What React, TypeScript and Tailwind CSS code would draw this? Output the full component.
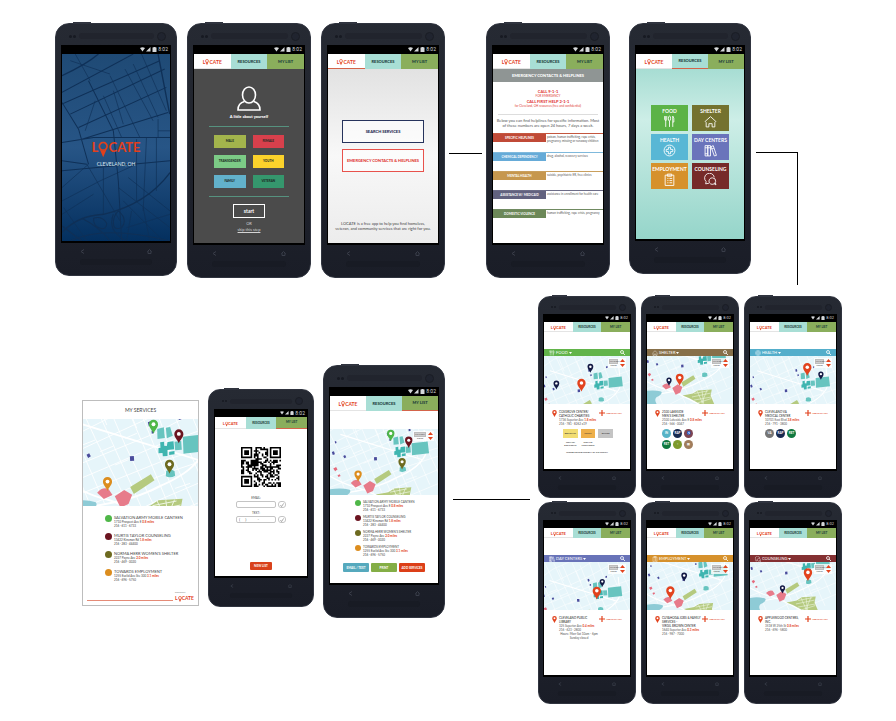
import type { ReactNode } from "react";

type Size = "lg" | "md" | "sm";
type Tab = "locate" | "resources" | "list" | "idle";

const PHONE = {
  lg: { head: "h-[22px]", foot: "h-[33px]", side: "px-[5px]", status: "h-[9px] text-[5px]", tabs: "h-[15px] text-[4px]", radius: "rounded-[14px]", cam: "size-[9px]", logo: "text-[5px]", icon: "size-[5px]", dot: "size-[3px]", grille: "h-[6px]", pad: "px-[19px]", keys: "px-[19px] pt-[6px]" },
  md: { head: "h-[20px]", foot: "h-[29px]", side: "px-[5px]", status: "h-[8px] text-[5px]", tabs: "h-[12px] text-[3px]", radius: "rounded-[12px]", cam: "size-[8px]", logo: "text-[4px]", icon: "size-[4px]", dot: "size-[2px]", grille: "h-[5px]", pad: "px-[16px]", keys: "px-[16px] pt-[6px]" },
  sm: { head: "h-[18px]", foot: "h-[27px]", side: "px-[4px]", status: "h-[8px] text-[4px]", tabs: "h-[10px] text-[3px]", radius: "rounded-[12px]", cam: "size-[7px]", logo: "text-[4px]", icon: "size-[4px]", dot: "size-[2px]", grille: "h-[5px]", pad: "px-[15px]", keys: "px-[15px] pt-[5px]" },
};

function Logo({ className }: { className: string }) {
  return (
    <span className={`inline-flex items-baseline font-bold leading-none text-[#e2401c] ${className}`} aria-label="LOCATE">
      <span>L</span>
      <svg viewBox="0 0 20 32" className="h-[1.25em] w-[0.8em] translate-y-[0.42em]" aria-hidden="true">
        <circle cx="10" cy="9.5" r="7.6" fill="none" stroke="currentColor" strokeWidth="3.4" />
        <path d="M3 15q7 6 14 0L10 31z" fill="currentColor" />
      </svg>
      <span>CATE</span>
    </span>
  );
}

function StatusBar({ size }: { size: Size }) {
  const p = PHONE[size];
  return (
    <div className={`flex shrink-0 items-center justify-end gap-px bg-black pr-[2px] font-[Roboto,sans-serif] leading-none text-[#d5d8da] ${p.status}`}>
      <svg viewBox="0 0 10 10" className={p.icon} fill="currentColor"><path d="M0 2Q5-1 10 2L5 9z" /></svg>
      <svg viewBox="0 0 10 10" className={p.icon} fill="currentColor"><path d="M9 0v9H0z" /></svg>
      <svg viewBox="0 0 10 10" className={p.icon} fill="currentColor"><path d="M1 1h2V0h4v1h2v9H1z" /></svg>
      <span>8:02</span>
    </div>
  );
}

function Tabs({ size, active }: { size: Size; active: Tab }) {
  const p = PHONE[size];
  const line = "border-b border-[#d4644a]";
  return (
    <nav className={`grid shrink-0 grid-cols-3 font-black leading-none text-[#1b3c3a] ${p.tabs}`}>
      <button type="button" className={`flex items-center justify-center bg-white ${active === "locate" ? line : "border-b border-[#e4e4e4]"}`}>
        <Logo className={p.logo} />
      </button>
      <button type="button" className={`flex items-center justify-center bg-[#a8ded5] ${active === "resources" ? line : ""}`}>RESOURCES</button>
      <button type="button" className={`flex items-center justify-center bg-[#8aae5c] ${active === "list" ? line : ""}`}>MY LIST</button>
    </nav>
  );
}

function Phone({ size, box, tab, children }: { size: Size; box: string; tab?: Tab; children: ReactNode }) {
  const p = PHONE[size];
  return (
    <article className={`relative flex shrink-0 flex-col border border-[#30343f] bg-linear-to-b from-[#262a33] to-[#1a1d27] bg-origin-border ${p.radius} ${p.side} ${box}`}>
      <div className="absolute -top-[2px] left-[14%] h-px w-[15%] bg-[#30343f]" />
      <div className={`-mt-px flex shrink-0 items-center pt-[4px] pr-[5px] pl-[8px] ${p.head}`}>
        <i className={`rounded-full bg-[#171a22] ${p.dot}`} />
        <i className={`ml-px rounded-full bg-[#171a22] ${p.dot}`} />
        <i className={`mx-[3px] flex-1 rounded-sm bg-[#21242d] ${p.grille}`} />
        <i className={`rounded-full border border-[#1a1d25] bg-[#20242f] ${p.cam}`} />
      </div>
      <div className="flex min-h-0 flex-1 flex-col bg-black px-px pb-[2px]">
        <StatusBar size={size} />
        <div className="flex min-h-0 flex-1 flex-col overflow-hidden bg-white">
          {tab && <Tabs size={size} active={tab} />}
          {children}
        </div>
      </div>
      <div className={`-mb-px shrink-0 ${p.foot}`}>
        <div className={`flex justify-between text-[#393d49] ${p.keys}`}>
          <svg viewBox="0 0 10 10" className={p.icon} fill="none" stroke="currentColor" strokeWidth="2"><path d="M8 1L2 5l6 4" /></svg>
          <svg viewBox="0 0 10 10" className={p.icon} fill="none" stroke="currentColor" strokeWidth="2"><path d="M1 5l4-4 4 4M2 4v5h6V4" /></svg>
        </div>
        <div className={p.pad}><div className={`mt-[5px] rounded-sm bg-[#181b24] ${p.grille}`} /></div>
      </div>
    </article>
  );
}

/* ---------- Maps ---------- */

type Pin = { x: number; y: number; h: number; color: string };
const RED = "#e2431e";
const NAVY = "#141a45";

function MapPin({ x, y, h, color }: Pin) {
  return (
    <g transform={`translate(${x} ${y}) scale(${h / 40})`}>
      <path d="M0 0C-4-11-13-17-13-27a13 13 0 0 1 26 0C13-17 4-11 0 0z" fill={color} />
      <circle cy="-27" r="5.5" fill="#fff" />
    </g>
  );
}

function CityMap({ view, pins, height }: { view: string; pins: Pin[]; height: string }) {
  return (
    <svg viewBox={view} preserveAspectRatio="xMidYMid slice" className={`block w-full shrink-0 bg-[#e6f5fa] ${height}`} role="img" aria-label="Map of Cleveland services">
      <g stroke="#fff" strokeWidth="2.6" fill="none">
        <path d="M-30 110L40 60 130 20M-30 165L180 60 260 10M-30 215L230 95 330 40M-30 255L240 145 400 60M-30 300L100 245 250 180 450 110" />
        <path d="M-30 345L120 285 270 225 450 170M20 370L150 315 300 255 450 205M100 420L240 350 450 260M200 420L330 370 450 320" />
        <path d="M0 30L60 160 130 300 190 420M45 30L110 170 200 370M90 40L150 180 240 370M140 30L200 170 280 360M180 40L240 190 330 400M225 20L290 210 370 390" />
        <path d="M270 20L330 170 400 330M320 20L370 140 450 310M-30 200L20 300 70 420M-30 100L30 220 90 360M370 20L450 200" />
        <path d="M70 60L95 120M160 70L185 130M22 180L60 165M75 200L115 183M120 240L160 224M215 130L250 116M150 160L185 145M300 310L345 295M225 320L262 302" />
      </g>
      <g stroke="#fff" strokeWidth="5.5" fill="none">
        <path d="M22 368Q170 350 250 305 370 255 386 190L376 100M-30 290Q40 330 90 342T260 420M22 118L370 225" />
      </g>
      <path d="M-30 352Q20 340 62 352 70 362 50 375 20 385 38 416L-30 420z" fill="#8ecbd6" />
      <path d="M66 323Q82 305 100 312L112 330 86 342z" fill="#e77b8a" />
      <path d="M119 334L147 315 171 329 160 357 136 368z" fill="#e77b8a" />
      <path d="M-8 262l12-6 6 10-10 8zM10 290l9-4 4 8-9 4z" fill="#e5697b" />
      <path d="M165 306L227 268 238 286 176 327z" fill="#b5ca7f" />
      <path d="M225 362L250 346 322 341 316 372 336 420 262 416 205 385 172 372z" fill="#b5ca7f" />
      <path d="M232 362l72-14M246 348l30 66M272 346l8 68M298 344L270 412M220 380l96-20M230 396l90-16M250 410l70-22" stroke="#eef6e4" strokeWidth="3" fill="none" />
      <g fill="#67c4bf">
        <path d="M246 132l20-5 3 32-22 3zM272 128l13-2 8 26-18 8zM323 155l68-7 6 50-72 8z" />
        <path d="M298 170l20-2 2 26-20 2zM273 258q12-8 25 0l2 14q-14 8-28 2z" />
      </g>
      <path d="M255 172l12-2v12l8 1 2-12 18-2 2 24-20 2v18l-14 1-1-10-12 1v-16l6-1zM282 200l16-2v10l-16 2z" fill="#3fb5b0" />
      <g fill="#4a4c9c">
        <path d="M34 209l8-4 5 9-8 5zM164 214l12-1 1 14-12 1zM218 112l8-3 3 12-8 3zM310 96l8-2 1 9-8 2zM229 137l7-1 1 8-7 2z" />
        <path d="M-14 192l9-3 4 13-9 3zM-2 148l6-2 2 8-6 2z" />
      </g>
      {pins.map((pin) => <MapPin key={`${pin.x}-${pin.y}`} {...pin} />)}
    </svg>
  );
}

const MY_PINS = [
  { x: 235, y: 146, color: "#4fb748" },
  { x: 311, y: 175, color: "#6b1420" },
  { x: 283, y: 266, color: "#6d6a1f" },
  { x: 97, y: 318, color: "#dc8d1e" },
];

function DistanceControl({ large = false }: { large?: boolean }) {
  return (
    <div className="absolute top-[2px] right-[4px] flex items-center gap-[2px] bg-white/80 p-px text-center text-[2px] leading-[4px] text-[#333]">
      <div className={large ? "w-[12px]" : "w-[9px]"}>
        <div className="border border-[#bdbdbd] bg-[#cfcfcf] leading-[3px]">MINIMUM</div>
        <div className="leading-[3px]">5 miles</div>
      </div>
      <div className="flex flex-col gap-[2px]">
        <button type="button" aria-label="Increase distance"><svg viewBox="0 0 10 6" className="block h-[3px] w-[5px]"><path d="M0 6l5-6 5 6z" fill={RED} /></svg></button>
        <button type="button" aria-label="Decrease distance"><svg viewBox="0 0 10 6" className="block h-[3px] w-[5px]"><path d="M0 0l5 6 5-6z" fill={RED} /></svg></button>
      </div>
    </div>
  );
}

/* ---------- Category glyphs ---------- */

const GLYPH: Record<string, ReactNode> = {
  food: <path d="M3 2v6q0 2 2 2t2-2V2M5 2v20M10 6q0-4 2-4t2 4-2 5-2-5M12 11v11M18 22V2q3 3 2 11h-2" />,
  shelter: <path d="M2 12L12 3l10 9-2 2v8h-5v-6H9v6H4v-8z" />,
  health: <><circle cx="12" cy="12" r="10" /><path d="M10 6h4v4h4v4h-4v4h-4v-4H6v-4h4z" /></>,
  day: <path d="M2 3h5v19H2zM7 3h5v19H7zM2 7h10M2 18h5M13 5l4-2 6 18-4 1zM14 9l4-1" />,
  employment: <path d="M4 4h16v19H4zM8 2h8v4H8zM8 10h2M12 10h5M8 14h2M12 14h5M8 18h2M12 18h5" />,
  counseling: <path d="M9 19l-6 1 1-4A9 9 0 1 1 19 8M16 9a6 6 0 1 1-1 12 7 7 0 0 1-5-3 6 6 0 0 1 6-9zM19 20l3 2-1-4" />,
};

function Glyph({ name, className }: { name: string; className: string }) {
  return <svg viewBox="0 0 24 24" className={className} fill="none" stroke="currentColor" strokeWidth="1.6" aria-hidden="true">{GLYPH[name]}</svg>;
}

/* ---------- Top row screens ---------- */

function SplashScreen() {
  return (
    <div className="relative flex flex-1 flex-col items-center bg-linear-to-b from-[#1f4a75] via-[#275586] to-[#04305f] pt-[80px]">
      <svg viewBox="35 120 326 560" preserveAspectRatio="none" className="absolute inset-0 size-full" fill="none" stroke="#0f3057" aria-hidden="true">
        <path strokeWidth="4" d="M35 185Q110 150 145 120M325 120L360 300M35 655Q80 605 160 600 290 570 361 475M35 635L95 680" />
        <path strokeWidth="3" d="M35 235L250 120M35 270L330 140M60 300L345 165M85 340L350 220M95 375L355 295M35 265L85 345 115 450M115 200L190 350 205 500 215 680M35 470L361 440M35 385L130 370 361 370M35 440L110 450" />
        <path strokeWidth="2" d="M75 120L120 200M180 185L270 370M225 165L310 320M250 150L325 310M275 120L350 290M160 245L215 370M135 260L105 350M60 140L180 180M190 230L220 330M35 520L115 450M110 450L210 620M35 560L150 500 260 450M160 460V600M260 375V560M290 370L280 590M320 370V530M235 490L361 590M205 520L361 640M220 560L340 680M35 600L130 540M40 580L110 680M245 590L230 680M280 580L300 680M230 640L361 600M325 315V370H361M325 350H361" />
        <path strokeWidth="3" d="M95 612Q150 640 180 680M130 612q25-8 40 15 0 20-20 15t-20-30M190 600Q170 650 230 680M205 590q30 25 10 50-25 10-25-15 0-20 15-35M60 680Q160 630 361 680" />
      </svg>
      <div className="relative"><Logo className="text-[13px]" /></div>
      <p className="relative mt-[3px] text-[5px] leading-[6px] text-[#dfe7ef]">CLEVELAND, OH</p>
    </div>
  );
}

const PEOPLE = [
  ["MALE", "bg-[#a3b44c]"], ["FEMALE", "bg-[#d8404c]"],
  ["TRANSGENDER", "bg-[#7ccb86]"], ["YOUTH", "bg-[#fbd22b]"],
  ["FAMILY", "bg-[#62b1cb]"], ["VETERAN", "bg-[#35976d]"],
];

function AboutScreen() {
  return (
    <div className="flex flex-1 flex-col items-center bg-[#4b4b4b] pt-[17px] text-[4px] leading-[5px] text-white">
      <svg viewBox="0 0 24 25" className="h-[25px] w-[26px]" fill="none" stroke="#fff" strokeWidth="1.6" aria-hidden="true">
        <ellipse cx="12" cy="9" rx="6.5" ry="8" />
        <path d="M7.500 15.500Q1 17 1 24h22q0-7-6.500-8.500" />
      </svg>
      <p className="mt-[3px] font-black">A little about yourself</p>
      <div className="mt-[7px] grid w-[80px] grid-cols-2 gap-x-[7px] gap-y-[7px] border-y border-[#56927f] px-[5px] py-[8px]">
        {PEOPLE.map(([label, color]) => (
          <button key={label} type="button" className={`h-[13px] text-[3px] leading-none font-black text-[#1d2b25] ${color}`}>{label}</button>
        ))}
      </div>
      <button type="button" className="mt-[7px] h-[14px] w-[32px] border border-white text-[5px] leading-none font-bold">start</button>
      <p className="mt-[3px] text-[#d4d4d4]">OR</p>
      <a href="#skip" className="mt-px text-[#d4d4d4] underline">skip this step</a>
    </div>
  );
}

function HomeScreen() {
  return (
    <div className="flex flex-1 flex-col items-center bg-linear-to-b from-[#e2e2e2] via-[#f8f8f8] to-[#ececec] pt-[51px] text-[4px] font-black">
      <button type="button" className="h-[23px] w-[82px] border border-[#26335c] bg-white/60 text-[#1c2850]">SEARCH SERVICES</button>
      <button type="button" className="mt-[6px] h-[23px] w-[82px] border border-[#e8524c] bg-white/60 whitespace-nowrap text-[#e03a34]">EMERGENCY CONTACTS &amp; HELPLINES</button>
      <p className="mt-auto mb-[12px] text-center leading-[5px] font-normal whitespace-nowrap text-[#444]">LOCATE is a free app to help you find homeless,<br />veteran, and community services that are right for you.</p>
    </div>
  );
}

const HELPLINES = [
  ["SPECIFIC HELPLINES", "poison, human trafficking, rape crisis, pregnancy, missing or runaway children", "border-[#c4573f]", "bg-[#c04a37]"],
  ["CHEMICAL DEPENDENCY", "drug, alcohol, recovery services", "border-[#7fb9dc]", "bg-[#66abd8]"],
  ["MENTAL HEALTH", "suicide, psychiatric ER, free clinics", "border-[#c99f5d]", "bg-[#c6974e]"],
  ["ASSISTANCE W/ MEDICAID", "assistance in enrollment for health care", "border-[#6d6d88]", "bg-[#62627f]"],
  ["DOMESTIC VIOLENCE", "human trafficking, rape crisis, pregnancy", "border-[#708a61]", "bg-[#6c8858]"],
];

function HelplinesScreen() {
  return (
    <div className="flex flex-1 flex-col text-center text-[4px] leading-[5px] text-[#555]">
      <h2 className="h-[13px] bg-[#8f9594] leading-[13px] font-black whitespace-nowrap text-white">EMERGENCY CONTACTS &amp; HELPLINES</h2>
      <div className="mx-[5px] border-b border-[#ddd] pt-[7px] pb-[6px] text-[#e2403a]">
        <p className="font-black">CALL 9-1-1</p>
        <p className="text-[3px]">FOR EMERGENCY</p>
        <p className="font-black">CALL FIRST HELP 2-1-1</p>
        <p className="text-[3px] leading-[4px]">for Cleveland, OH resources (free and confidential)</p>
      </div>
      <p className="mt-[3px] whitespace-nowrap">Below you can find helplines for specific information. Most<br />of these numbers are open 24 hours, 7 days a week.</p>
      <dl className="mt-[5px] flex flex-col gap-[10px]">
        {HELPLINES.map(([label, text, border, fill]) => (
          <div key={label} className={`flex h-[9px] border-t text-[3px] ${border}`}>
            <dt className={`w-[53px] shrink-0 text-[3px] leading-[8px] font-bold whitespace-nowrap text-white ${fill}`}>{label}</dt>
            <dd className="flex-1 pt-px pl-px text-left leading-[4px]">{text}</dd>
          </div>
        ))}
      </dl>
    </div>
  );
}

const TILES = [
  ["FOOD", "food", "bg-[#5cb346]"], ["SHELTER", "shelter", "bg-[#74722f]"],
  ["HEALTH", "health", "bg-[#58b7d5]"], ["DAY CENTERS", "day", "bg-[#6a74bb]"],
  ["EMPLOYMENT", "employment", "bg-[#d6912c]"], ["COUNSELING", "counseling", "bg-[#762a29]"],
];

function ResourcesScreen() {
  return (
    <div className="flex-1 bg-linear-to-b from-[#a7ddd3] via-[#cdeee7] via-30% to-[#95d5ca] pt-[36px]">
      <div className="mx-auto grid w-[78px] grid-cols-2 gap-x-[4px] gap-y-[3px]">
        {TILES.map(([label, icon, color]) => (
          <button key={label} type="button" className={`flex h-[26px] flex-col items-center pt-[3px] text-[5px] leading-[6px] font-bold whitespace-nowrap text-white ${color}`}>
            {label}
            <Glyph name={icon} className="mt-px size-[13px]" />
          </button>
        ))}
      </div>
    </div>
  );
}

/* ---------- My list screens ---------- */

const SERVICES = [
  ["SALVATION ARMY MOBILE CANTEEN", "1710 Prospect Ave E", "0.8 miles", "216 · 611 · 6733", "bg-[#4fb748]"],
  ["MURTIS TAYLOR COUNSELING", "13422 Kinsman Rd", "1.8 miles", "216 · 283 · 44400", "bg-[#6b1420]"],
  ["NORMA HERR WOMEN'S SHELTER", "2227 Payne Ave", "2.0 miles", "216 · 469 · 0020", "bg-[#6d6a1f]"],
  ["TOWARDS EMPLOYMENT", "1255 Euclid Ave Ste 300", "3.1 miles", "216 · 696 · 5750", "bg-[#dc8d1e]"],
];

function ServiceList({ large }: { large: boolean }) {
  return (
    <ul className={large ? "mt-[9px] flex flex-col gap-[5px] pl-[22px]" : "mt-[5px] flex flex-col gap-[3px] pl-[25px]"}>
      {SERVICES.map(([name, street, miles, phone, color]) => (
        <li key={name} className="flex gap-[2px] text-[3px] leading-[4px] whitespace-nowrap text-[#444]">
          <i className={`shrink-0 rounded-full ${large ? "size-[7px]" : "size-[6px]"} ${color}`} />
          <div>
            <h3 className={large ? "text-[4px] leading-[5px]" : ""}>{name}</h3>
            <p>{street} <span className="font-bold text-[#e2431e]">{miles}</span></p>
            <p>{phone}</p>
          </div>
        </li>
      ))}
    </ul>
  );
}

function ServicesCard() {
  return (
    <section className="mt-[35px] flex h-[206px] w-[117px] shrink-0 flex-col border border-[#bdbdbd] bg-white">
      <h2 className="h-[18px] text-center text-[5px] leading-[18px] text-[#444]">MY SERVICES</h2>
      <CityMap view="22 102 348 261" height="h-[87px]" pins={MY_PINS.map((p) => ({ ...p, h: 42 }))} />
      <ServiceList large />
      <div className="mx-[4px] mt-auto mb-[4px] flex items-end gap-[2px]">
        <span className="h-px flex-1 bg-[#e58b77]" />
        <span className="flex flex-col text-[2px] leading-[3px] text-[#777]">powered by<Logo className="text-[5px]" /></span>
      </div>
    </section>
  );
}

const QR = 25;
function isDark(x: number, y: number) {
  for (const [ox, oy] of [[0, 0], [QR - 7, 0], [0, QR - 7]]) {
    const dx = x - ox;
    const dy = y - oy;
    if (dx >= -1 && dx <= 7 && dy >= -1 && dy <= 7) {
      const ring = Math.max(Math.abs(dx - 3), Math.abs(dy - 3));
      return ring === 3 || ring <= 1;
    }
  }
  return ((x * 73 + y * 151 + x * y * 37 + ((x * x * 11) ^ (y * y * 7))) % 19) < 11;
}

function QrCode() {
  const cells: string[] = [];
  for (let y = 0; y < QR; y++) for (let x = 0; x < QR; x++) if (isDark(x, y)) cells.push(`M${x} ${y}h1v1h-1z`);
  return <svg viewBox="0 0 25 25" className="size-[40px]" role="img" aria-label="QR code"><path d={cells.join("")} fill="#000" /></svg>;
}

function ContactField({ id, label, value }: { id: string; label: string; value: string }) {
  return (
    <div className="mt-[3px] flex flex-col text-[3px] leading-[5px]">
      <label htmlFor={id} className="w-[40px] text-center text-[#444]">{label}</label>
      <div className="flex gap-[2px]">
        <input id={id} defaultValue={value} className="h-[7px] w-[40px] rounded-[2px] border border-[#c4c4c4] bg-white px-[2px] text-[4px] leading-none text-[#555]" />
        <button type="button" aria-label={`Send ${label.toLowerCase()}`} className="flex h-[7px] w-[8px] items-center justify-center rounded-[3px] border border-[#c4c4c4]">
          <svg viewBox="0 0 10 10" className="size-[4px]" fill="none" stroke="#777" strokeWidth="1.500"><path d="M1 5l3 4 5-8" /></svg>
        </button>
      </div>
    </div>
  );
}

function QrScreen() {
  return (
    <div className="flex flex-1 flex-col items-center pt-[18px]">
      <QrCode />
      <div className="mt-[6px]">
        <ContactField id="email" label="EMAIL:" value="" />
        <ContactField id="text" label="TEXT:" value="(     )           -" />
      </div>
      <button type="button" className="mt-auto mb-[6px] h-[8px] w-[22px] rounded-[1px] bg-[#d9421c] text-[3px] leading-none font-bold text-white">NEW LIST</button>
    </div>
  );
}

function ListScreen() {
  return (
    <div className="flex flex-1 flex-col pt-[18px]">
      <div className="relative">
        <CityMap view="-23 95 459 279" height="h-[66px]" pins={MY_PINS.map((p) => ({ ...p, h: 48 }))} />
        <DistanceControl large />
      </div>
      <ServiceList large={false} />
      <div className="mx-auto mt-auto mb-[11px] grid w-[82px] grid-cols-3 gap-[2px] text-[3px] leading-[8px] font-bold whitespace-nowrap text-white">
        <button type="button" className="h-[9px] rounded-[1px] bg-[#56a9bd]">EMAIL / TEXT</button>
        <button type="button" className="h-[9px] rounded-[1px] bg-[#84ae46]">PRINT</button>
        <button type="button" className="h-[9px] rounded-[1px] bg-[#dc3f18]">ADD SERVICES</button>
      </div>
    </div>
  );
}

/* ---------- Category screens ---------- */

type Category = { title: string; icon: string; bar: string; view: string; pins: Pin[]; name: string[]; street: string; miles: string; phone: string; hours?: string[]; extra?: ReactNode };

function Badges({ items }: { items: string[][] }) {
  return (
    <div className="mt-[3px] ml-[15px] grid w-fit grid-cols-3 gap-[2px]">
      {items.map(([text, color]) => (
        <span key={color} className={`flex size-[9px] items-center justify-center rounded-full text-[3px] leading-none font-bold text-white ${color}`}>{text}</span>
      ))}
    </div>
  );
}

function Meals() {
  return (
    <div className="text-center text-[2px] leading-[3px] text-[#333]">
      <div className="mt-[3px] ml-[19px] grid w-[50px] grid-cols-3 gap-x-[3px] gap-y-[3px] font-bold whitespace-nowrap">
        <button type="button" className="h-[9px] bg-[#f2dd72]">BREAKFAST</button>
        <button type="button" className="h-[9px] bg-[#eeb04b]">LUNCH</button>
        <button type="button" className="h-[9px] bg-[#c4c4c4]">DINNER</button>
        <span>MON-FRI<br />8:00-9:00AM</span>
        <span>MON-FRI<br />12:00-1:00PM</span>
      </div>
      <p className="mt-[4px] font-bold">CLOSED SECOND MONDAY OF THE MONTH</p>
    </div>
  );
}

const CATEGORIES: Category[] = [
  { title: "FOOD", icon: "food", bar: "bg-[#62b44a]", view: "-11 42 447 247", pins: [{ x: 230, y: 128, h: 46, color: NAVY }, { x: 55, y: 214, h: 46, color: NAVY }, { x: 184, y: 225, h: 66, color: RED }], name: ["COSGROVE CENTER/", "CATHOLIC CHARITIES"], street: "1736 Superior Ave", miles: "1.8 miles", phone: "216 · 781 · 8262 x19", extra: <Meals /> },
  { title: "SHELTER", icon: "shelter", bar: "bg-[#87704a]", view: "-15 169 450 247", pins: [{ x: 102, y: 322, h: 42, color: NAVY }, { x: 157, y: 322, h: 62, color: RED }], name: ["2100 LAKESIDE", "MEN'S SHELTER"], street: "2100 Lakeside Ave E", miles: "0.8 miles", phone: "216 · 566 · 0047", extra: <Badges items={[["IN", "bg-[#56b3c6]"], ["RAP", "bg-[#182a50]"], ["♿", "bg-[#7d4553]"], ["RET", "bg-[#10793f]"], ["◔", "bg-[#7d9a2c]"], ["▤", "bg-[#a07d5c]"]]} /> },
  { title: "HEALTH", icon: "health", bar: "bg-[#54aecb]", view: "-17 42 447 247", pins: [{ x: 280, y: 144, h: 66, color: RED }, { x: 350, y: 164, h: 42, color: NAVY }], name: ["CLEVELAND VA", "MEDICAL CENTER"], street: "10701 East Blvd", miles: "3.8 miles", phone: "216 · 791 · 3800", extra: <Badges items={[["VA", "bg-[#757575]"], ["RAP", "bg-[#182a50]"], ["RET", "bg-[#10793f]"]]} /> },
  { title: "DAY CENTERS", icon: "day", bar: "bg-[#6873b8]", view: "-8 23 447 247", pins: [{ x: 294, y: 152, h: 42, color: NAVY }, { x: 266, y: 216, h: 66, color: RED }], name: ["CLEVELAND PUBLIC", "LIBRARY"], street: "325 Superior Ave", miles: "0.4 miles", phone: "216 · 623 · 2800", hours: ["Hours: Mon-Sat 10am - 6pm", "Sunday closed"] },
  { title: "EMPLOYMENT", icon: "employment", bar: "bg-[#d6912c]", view: "-22 130 450 247", pins: [{ x: 102, y: 321, h: 66, color: RED }, { x: 173, y: 230, h: 46, color: NAVY }], name: ["CUYAHOGA JOBS & FAMILY", "SERVICES -", "VIRGIL BROWN CENTER"], street: "1640 Superior Ave", miles: "0.3 miles", phone: "216 · 987 · 7000" },
  { title: "COUNSELING", icon: "counseling", bar: "bg-[#843032]", view: "-20 164 450 247", pins: [{ x: 282, y: 262, h: 66, color: RED }, { x: 151, y: 326, h: 42, color: NAVY }], name: ["APPLEWOOD CENTERS,", "INC."], street: "3518 W 25th St", miles: "0.8 miles", phone: "216 · 696 · 5800" },
];

function CategoryScreen({ c }: { c: Category }) {
  return (
    <div className="flex flex-1 flex-col pt-[17px] text-[3px] leading-[4px] text-[#555]">
      <h2 className={`flex h-[7px] shrink-0 items-center gap-px px-[5px] text-[4px] leading-none text-white ${c.bar}`}>
        <Glyph name={c.icon} className="size-[6px]" />
        {c.title}
        <svg viewBox="0 0 10 6" className="h-[2px] w-[3px]"><path d="M0 0h10L5 6z" fill="currentColor" /></svg>
        <button type="button" aria-label="Search" className="ml-auto">
          <svg viewBox="0 0 10 10" className="block size-[5px]" fill="none" stroke="#fff" strokeWidth="1.600"><circle cx="4" cy="4" r="3" /><path d="M6 6l4 4" /></svg>
        </button>
      </h2>
      <div className="relative">
        <CityMap view={c.view} pins={c.pins} height="h-[48px]" />
        <DistanceControl />
      </div>
      <div className="mt-[6px] flex items-start whitespace-nowrap">
        <svg viewBox="-13 -40 26 40" className="mr-[2px] ml-[8px] h-[7px] w-[5px] shrink-0"><MapPin x={0} y={0} h={40} color={RED} /></svg>
        <div className="w-[40px] shrink-0">
          {c.name.map((line) => <h3 key={line} className="text-[#222]">{line}</h3>)}
          <p>{c.street} <span className="font-bold text-[#e2431e]">{c.miles}</span></p>
          <p>{c.phone}</p>
          {c.hours?.map((line) => <p key={line} className="text-center">{line}</p>)}
        </div>
        <button type="button" className="flex items-center gap-px text-[2px] leading-none font-bold text-[#e2431e]">
          <svg viewBox="0 0 10 10" className="size-[6px]" stroke="currentColor" strokeWidth="2"><path d="M5 0v10M0 5h10" /></svg>
          ADD TO MY LIST
        </button>
      </div>
      {c.extra}
    </div>
  );
}

export default function App() {
  return (
    <main className="mx-auto w-full max-w-4xl overflow-hidden bg-white pb-[18px] font-[Lato,'Liberation_Sans',sans-serif]">
      <section className="flex items-start pt-[23px] pl-[55px]">
        <Phone size="lg" box="h-[253px] w-[122px]"><SplashScreen /></Phone>
        <div className="ml-[10px] flex items-start gap-[10px]">
          <Phone size="lg" box="h-[255px] w-[124px]" tab="idle"><AboutScreen /></Phone>
          <Phone size="lg" box="h-[255px] w-[124px]" tab="locate"><HomeScreen /></Phone>
        </div>
        <div className="mx-[4px] mt-[130px] h-px w-[33px] shrink-0 bg-black" />
        <Phone size="lg" box="h-[255px] w-[124px]" tab="idle"><HelplinesScreen /></Phone>
        <div className="ml-[19px] flex shrink-0 items-start">
          <Phone size="lg" box="h-[251px] w-[122px]" tab="resources"><ResourcesScreen /></Phone>
          <div className="mt-[129px] ml-[5px] h-[133px] w-[42px] border-t border-r border-black" />
        </div>
      </section>
      <section className="mt-[11px] flex items-start pl-[82px]">
        <div className="mt-[69px] flex items-start gap-[9px]">
          <ServicesCard />
          <div className="mt-[24px]"><Phone size="md" box="h-[218px] w-[106px]" tab="list"><QrScreen /></Phone></div>
          <Phone size="lg" box="h-[253px] w-[122px]" tab="list"><ListScreen /></Phone>
        </div>
        <div className="mx-[8px] mt-[203px] h-px w-[77px] shrink-0 bg-black" />
        <div className="grid shrink-0 grid-cols-3 gap-x-[5px] gap-y-[4px]">
          {CATEGORIES.map((c) => (
            <Phone key={c.title} size="sm" box="h-[202px] w-[98px]" tab="idle">
              <CategoryScreen c={c} />
            </Phone>
          ))}
        </div>
      </section>
    </main>
  );
}
